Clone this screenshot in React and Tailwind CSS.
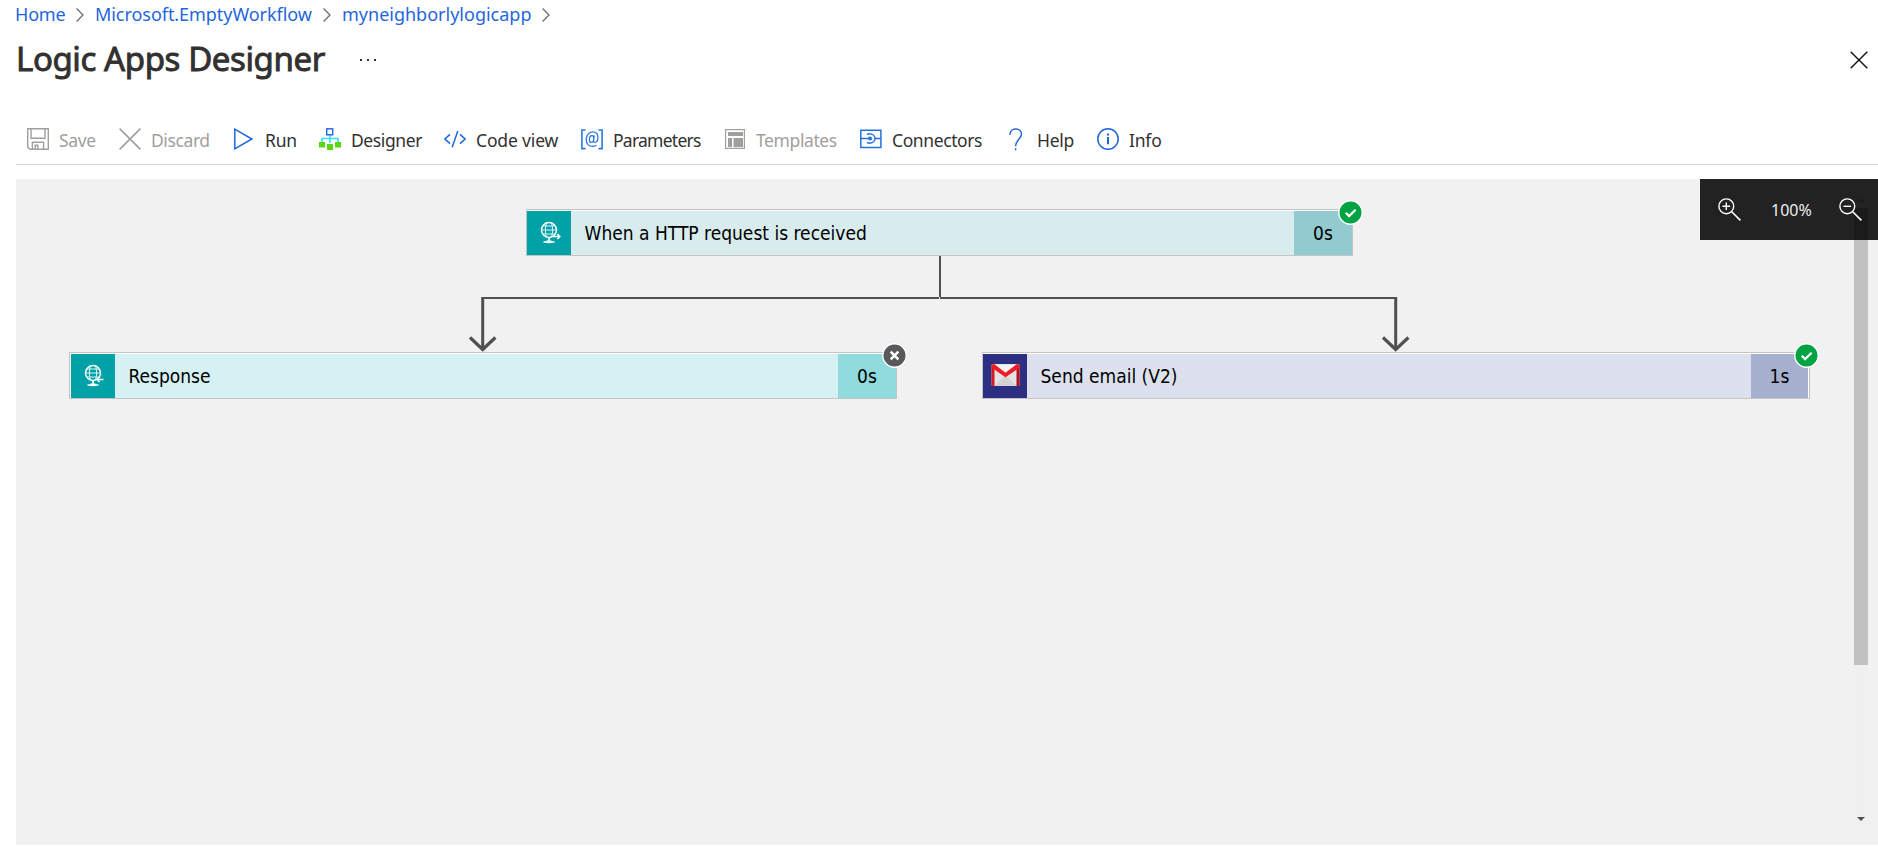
const BLUE = '#1f66dd';

function Chevron() {
  return (
    <svg className="block h-[16px] w-[8px] shrink-0" viewBox="0 0 8 16" fill="none" stroke="#666" strokeWidth="1.2">
      <path d="M.6 1.5 7 8 .6 14.5" />
    </svg>
  );
}

function SaveIcon() {
  return (
    <svg className="block h-[22px] w-[22px]" viewBox="0 0 22 22" fill="none" stroke="#a19f9d" strokeWidth="1.4">
      <path d="M.7.7h20.6v20.6H3L.7 19zM4 .7v9.6h14V.7M5.4 21.3v-7h11.2v7M8.2 21.3v-4h2.6v4" />
    </svg>
  );
}
function DiscardIcon() {
  return (
    <svg className="block h-[22px] w-[22px]" viewBox="0 0 22 22" fill="none" stroke="#a19f9d" strokeWidth="1.6">
      <path d="M.6.6l20.8 20.8M21.4.6.6 21.4" />
    </svg>
  );
}
function RunIcon() {
  return (
    <svg className="block h-[22px] w-[19px]" viewBox="0 0 19 22" fill="none" stroke={BLUE} strokeWidth="1.5">
      <path d="M.8 1.2v19.6L17.8 11z" />
    </svg>
  );
}
function DesignerIcon() {
  return (
    <svg className="block h-[22px] w-[22px]" viewBox="0 0 22 22" fill="none">
      <path d="M11 7v8M3 15v-4.5h16V15" stroke="#32e4f5" strokeWidth="1.6" />
      <rect x="7.7" y=".8" width="6" height="6" stroke={BLUE} strokeWidth="1.4" fill="#fff" />
      <path d="M0 14h6v5.600H0zM16 14h6v5.600h-6zM8 16h6v6H8z" fill="#5ad80f" />
    </svg>
  );
}
function CodeIcon() {
  return (
    <svg className="block h-[22px] w-[22px]" viewBox="0 0 22 22" fill="none" stroke={BLUE} strokeWidth="1.5">
      <path d="M6 6.4.9 11 6 15.600M16 6.400l5.100 4.600-5.100 4.600M13.800 3 8.200 19.300" />
    </svg>
  );
}
function ParametersIcon() {
  return (
    <svg className="block h-[22px] w-[22px]" viewBox="0 0 22 22" fill="none" stroke="#2878e0" strokeWidth="1.6">
      <path d="M4.500 2H.9v18.600h3.600M17.500 2h3.600v18.600h-3.600" />
      <path strokeWidth="1.300" d="M15.400 17.200c-1.200.8-2.500 1.200-4 1.200-3.600 0-6.100-2.600-6.100-6.500 0-4.600 2.700-8 6.400-8 3.200 0 5.200 2.300 5.200 5.700 0 3-1.300 4.800-2.900 4.800-1.200 0-1.700-.9-1.500-2.300l.8-4.600M12.800 10.400c0-1.800-.7-2.700-1.800-2.700-1.500 0-2.600 1.800-2.600 4 0 1.700.7 2.700 1.800 2.700 1.500 0 2.600-1.700 2.600-4z" />
    </svg>
  );
}
function TemplatesIcon() {
  return (
    <svg className="block h-[20px] w-[20px]" viewBox="0 0 20 20" fill="none">
      <rect x=".6" y=".6" width="18.800" height="18.800" stroke="#a19f9d" strokeWidth="1.200" />
      <path d="M3 3h15v4H3zM3 9h4v9H3zM8.500 9H18v9H8.500z" fill="#a19f9d" />
    </svg>
  );
}
function ConnectorsIcon() {
  return (
    <svg className="block h-[22px] w-[22px]" viewBox="0 0 22 22" fill="none" stroke="#2571e0" strokeWidth="1.500">
      <path d="M.8 2.200h20.100v17.300H.8zM.8 10.500h9.200M15 10.500h6M7 6.700C8 5.900 9.200 5.700 10.400 5.900 13 6.100 15 8.200 15 10.500s-2 4.400-4.600 4.600c-1.200.2-2.400 0-3.400-.8" />
      <path d="M8.800 8.900h1.500a1.600 1.600 0 0 1 0 3.200H8.800z" fill="#2571e0" strokeWidth=".6" />
    </svg>
  );
}
function HelpIcon() {
  return (
    <svg className="block h-[23px] w-[14px]" viewBox="0 0 14 23" fill="none" stroke={BLUE} strokeWidth="1.500">
      <path d="M.9 6.800C.9 3.200 3.400.9 6.600.9s5.900 2 5.900 5.200c0 5-5.900 5.700-5.900 12.200M6.600 20.300v2" />
    </svg>
  );
}
function InfoIcon() {
  return (
    <svg className="block h-[22px] w-[22px]" viewBox="0 0 22 22" fill="none" stroke={BLUE}>
      <circle cx="11" cy="11" r="10.200" strokeWidth="1.500" />
      <path d="M11 9v7.300M11 5.500v2" strokeWidth="2" />
    </svg>
  );
}

const tools = [
  { Icon: SaveIcon, label: 'Save', box: 'w-[92px]', icon: 'w-[32px]', text: 'text-[#a19f9d] tracking-[-0.35px]' },
  { Icon: DiscardIcon, label: 'Discard', box: 'w-[115px]', icon: 'w-[32px]', text: 'text-[#a19f9d] tracking-[-0.4px]' },
  { Icon: RunIcon, label: 'Run', box: 'w-[85px]', icon: 'w-[31px]', text: 'text-[#323130] tracking-[-0.2px]' },
  { Icon: DesignerIcon, label: 'Designer', box: 'w-[125px]', icon: 'w-[32px]', text: 'text-[#323130] tracking-[-0.4px]' },
  { Icon: CodeIcon, label: 'Code view', box: 'w-[137px]', icon: 'w-[32px]', text: 'text-[#323130] tracking-[-0.15px]' },
  { Icon: ParametersIcon, label: 'Parameters', box: 'w-[144px]', icon: 'w-[32px]', text: 'text-[#323130] tracking-[-0.75px]' },
  { Icon: TemplatesIcon, label: 'Templates', box: 'w-[135px]', icon: 'w-[31px]', text: 'text-[#a19f9d] tracking-[-0.4px]' },
  { Icon: ConnectorsIcon, label: 'Connectors', box: 'w-[149px]', icon: 'w-[32px]', text: 'text-[#323130] tracking-[-0.4px]' },
  { Icon: HelpIcon, label: 'Help', box: 'w-[88px]', icon: 'w-[28px]', text: 'text-[#323130] tracking-[-0.3px]' },
  { Icon: InfoIcon, label: 'Info', box: 'w-[70px]', icon: 'w-[32px]', text: 'text-[#323130] tracking-[-0.2px]' },
];

function Globe({ reply }) {
  return (
    <svg className="block h-[24px] w-[24px]" viewBox="-2 0 24 24" fill="none" stroke="#fff" strokeWidth="1">
      <circle cx="10" cy="9" r="7.500" strokeWidth="1.400" />
      <path opacity=".85" d="M2.300 9h15.400M3.800 5h12.400M3.800 13h12.400M7.500 2.200c-1.500 4-1.500 9.600 0 13.600M12.500 2.200c1.500 4 1.500 9.600 0 13.600" />
      <path d="M10 16.700V22M4.500 21h11" strokeWidth="1.600" />
      <path d="M7.500 19.500h5v2.600h-5z" fill="#fff" stroke="none" />
      {reply ? (
        <path d="M14 15.500h6.500M16.600 13l-2.500 2.500 2.500 2.500" strokeWidth="1.400" />
      ) : (
        <path d="M14 15.500h6.500M18.400 13l2.500 2.500-2.500 2.500" strokeWidth="1.400" />
      )}
    </svg>
  );
}

function Gmail() {
  return (
    <svg className="relative -top-px block h-[22px] w-[29px]" viewBox="0 0 29 22">
      <rect x=".5" y="0" width="28" height="22" rx="1.500" fill="#e3e3e3" />
      <path d="M3.500 22 14.500 11 25.500 22z" fill="#d2d2d2" />
      <path d="M3 1h23L14.500 10z" fill="#f3f3f3" />
      <path d="M.5 1.500V20.500Q.5 22 2 22h1.500V5.500z" fill="#d71921" />
      <path d="M28.500 1.500V20.500Q28.500 22 27 22h-1.500V5.500z" fill="#b80e16" />
      <path d="M.5 2.300C.5.200 2.400-.5 3.800.6L14.500 8.700 25.200.6c1.400-1.100 3.300-.4 3.300 1.700 0 .8-.4 1.500-1 2L14.500 13.200 1.500 4.300C.9 3.800.5 3.100.5 2.300z" fill="#ee1c28" />
    </svg>
  );
}

function Badge({ ok, place = '-right-[11px]' }) {
  return (
    <svg className={`absolute -top-[10px] block h-[25px] w-[25px] ${place}`} viewBox="0 0 25 25" fill="none">
      <circle cx="12.500" cy="12.500" r="11.700" fill={ok ? '#00a343' : '#58595b'} stroke="#fff" strokeWidth="1.400" />
      {ok ? (
        <path d="m7.800 12.800 3.300 3.300 6.500-6.300" stroke="#fff" strokeWidth="2.200" />
      ) : (
        <path d="m8.700 8.700 7.600 7.600M16.300 8.700l-7.600 7.600" stroke="#fff" strokeWidth="2.600" />
      )}
    </svg>
  );
}

function Node({ place, iconBg, bg, timeBg, icon, title, time, timeWidth = 'w-[58px]', badgePlace, ok }) {
  return (
    <div className={`absolute flex h-[47px] border border-[#c4c4c4] bg-white pt-px ${place}`}>
      <div className={`flex h-[44px] w-[44px] shrink-0 items-center justify-center ${iconBg}`}>{icon}</div>
      <div className={`flex h-[44px] grow items-center pt-px pl-[13.5px] ${bg}`}>{title}</div>
      <div className={`flex h-[44px] shrink-0 items-center justify-center pt-px ${timeWidth} ${timeBg}`}>{time}</div>
      <Badge ok={ok} place={badgePlace} />
    </div>
  );
}

function ZoomIcon({ plus }) {
  return (
    <svg className="block h-[23px] w-[23px]" viewBox="0 0 23 23" fill="none" stroke="#fff" strokeWidth="1.400">
      <circle cx="8.300" cy="8.300" r="7.400" />
      <path d="m13.700 13.700 8.700 8.700" strokeWidth="1.600" />
      <path d={plus ? 'M4.500 8.300h7.600M8.300 4.500v7.600' : 'M4.500 8.300h7.600'} />
    </svg>
  );
}

export default function App() {
  return (
    <div className="flex h-[857px] w-[1878px] flex-col overflow-hidden bg-white font-['Noto_Sans',sans-serif] whitespace-nowrap">
      <nav className="flex h-[29px] items-center pl-[15px] text-[18px] leading-[29px] text-[#1f66dd]">
        <a className="w-[61px] tracking-[-0.2px]">Home</a>
        <Chevron />
        <a className="w-[239px] pl-[11px] tracking-[-0.05px]">Microsoft.EmptyWorkflow</a>
        <Chevron />
        <a className="w-[211px] pl-[11px]">myneighborlylogicapp</a>
        <Chevron />
      </nav>
      <header className="flex h-[61px] items-center pl-[16px]">
        <h1 className="w-[344px] pb-[2px] text-[33px] leading-[58px] tracking-[-0.4px] text-[#323130] [-webkit-text-stroke:0.9px_#323130]">Logic Apps Designer</h1>
        <div className="flex gap-[5px]">
          <span className="h-[2px] w-[2px] bg-[#323130]" />
          <span className="h-[2px] w-[2px] bg-[#323130]" />
          <span className="h-[2px] w-[2px] bg-[#323130]" />
        </div>
        <svg className="mr-[10px] ml-auto block h-[18px] w-[18px]" viewBox="0 0 18 18" stroke="#111" strokeWidth="1.400">
          <path d="m.7.700 16.600 16.600M17.300.7.700 17.300" />
        </svg>
      </header>
      <div className="ml-[16px] flex h-[75px] shrink-0 items-end border-b border-[#d0d0d0] pb-[14px] pl-[11px]">
        {tools.map(({ Icon, label, box, icon, text }) => (
          <div key={label} className={`flex h-[22px] shrink-0 items-center ${box}`}>
            <span className={`shrink-0 ${icon}`}><Icon /></span>
            <span className={`pt-[2px] text-[17.5px] leading-[22px] ${text}`}>{label}</span>
          </div>
        ))}
      </div>
      <main className="relative mt-[14px] ml-[16px] h-[666px] shrink-0 bg-[#f1f1f1] font-['DejaVu_Sans_Condensed','DejaVu_Sans',sans-serif] text-[19px] text-black">
        <svg className="absolute top-0 left-0 block h-[200px] w-[1500px]" viewBox="16 179 1500 200" fill="none" stroke="#505050">
          <path d="M940 256v41M482 298h457M940 298h457" strokeWidth="2" />
          <path d="M482.700 297v52M1395.700 297v52" strokeWidth="3" />
          <path d="m470 337.500 12.700 12 12.700-12M1383 337.500l12.700 12 12.700-12" strokeWidth="3.200" />
        </svg>
        <Node place="top-[30px] left-[510px] w-[827px]" iconBg="bg-[#00a2a8]" bg="bg-[#d8ecee]" timeBg="bg-[#92cbcf]" icon={<Globe />} title="When a HTTP request is received" time="0s" ok />
        <Node place="top-[173px] left-[53px] w-[828px] pl-px" iconBg="bg-[#00a2a8]" bg="bg-[#d6f1f4]" timeBg="bg-[#90dbde]" icon={<Globe reply />} title="Response" time="0s" />
        <Node place="top-[173px] left-[966px] w-[828px] pr-px" iconBg="bg-[#2d2f82]" bg="bg-[#dde1ed]" timeBg="bg-[#a6afce]" icon={<Gmail />} title="Send email (V2)" time="1s" timeWidth="w-[57px]" badgePlace="-right-[10px]" ok />
        <div className="absolute top-[8px] right-[9px] flex h-[642px] w-[16px] flex-col items-center bg-[#f0f0f0]">
          <span className="h-[21px]" />
          <span className="h-[457px] w-[14px] shrink-0 bg-[#c1c1c1]" />
          <svg className="mt-auto mb-[8px] block h-[4px] w-[8px]" viewBox="0 0 8 4"><path d="M0 0h8L4 4z" fill="#505050" /></svg>
        </div>
        <div className="absolute top-0 right-0 flex h-[61px] w-[178px] items-center bg-[#222] pl-[18px] font-['Noto_Sans',sans-serif] text-[16px] text-white">
          <ZoomIcon plus />
          <span className="w-[98px] pl-[30px] text-[#eee]">100%</span>
          <svg className="absolute top-[19px] right-[10px] block h-[42px] w-[14px]" viewBox="0 0 14 42"><path d="M3 4h8L7 0zM0 10h14v32H0z" fill="#1b1b1b" /></svg>
          <div className="relative"><ZoomIcon /></div>
        </div>
      </main>
    </div>
  );
}
